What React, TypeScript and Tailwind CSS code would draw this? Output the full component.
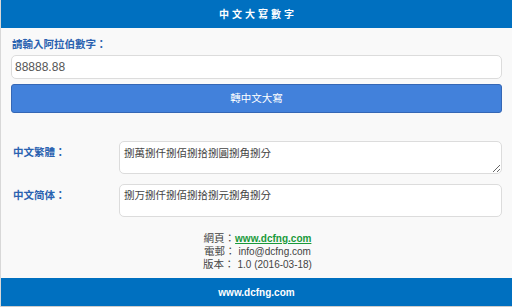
import React from "react";

const font = { fontFamily: '"Liberation Sans", "Noto Sans CJK TC", "Noto Sans CJK SC", sans-serif' };

export default function App() {
  return (
    <div
      className="w-[512px] h-[307px] bg-[#f9f9f9] flex flex-col overflow-hidden border-l border-[#d8d8d8]"
      style={font}
    >
      <div className="h-[28px] shrink-0 bg-[#0070c0] flex items-center justify-center text-white font-bold text-[10px] tracking-[3px] pl-[3px]">
        中文大寫數字
      </div>
      <div className="px-[10px] flex flex-col">
        <div className="mt-[9px] ml-[1px] h-[15px] leading-[15px] text-[10.5px] font-bold text-[#2a62b0]">
          請輸入阿拉伯數字：
        </div>
        <input
          className="mt-[3px] h-[24px] w-full rounded-[5px] border border-[#dcdcdc] bg-white px-[3px] text-[12px] text-[#555] outline-none"
          defaultValue="88888.88"
          style={font}
        />
        <button
          className="mt-[5px] h-[29px] w-full rounded-[3px] border border-[#3567b5] bg-[#4281db] text-white text-[10.5px] flex items-center justify-center"
          style={font}
        >
          轉中文大寫
        </button>
        <div className="mt-[28px] flex items-start">
          <div className="w-[108px] shrink-0 pt-[5px] pl-[2px] text-[10.5px] leading-[12px] font-bold text-[#2a62b0]">中文繁體：</div>
          <textarea
            className="h-[33px] flex-1 rounded-[5px] border border-[#dcdcdc] bg-white px-[4px] py-[4px] text-[10.5px] leading-[14px] text-[#444] outline-none"
            defaultValue="捌萬捌仟捌佰捌拾捌圓捌角捌分"
            style={font}
          />
        </div>
        <div className="mt-[10px] flex items-start">
          <div className="w-[108px] shrink-0 pt-[5px] pl-[2px] text-[10.5px] leading-[12px] font-bold text-[#2a62b0]">中文简体：</div>
          <div className="h-[33px] flex-1 rounded-[5px] border border-[#dcdcdc] bg-white px-[4px] py-[3px] text-[10.5px] leading-[14px] text-[#444]">
            捌万捌仟捌佰捌拾捌元捌角捌分
          </div>
        </div>
        <div className="mt-[15px] flex flex-col items-center text-[10.5px] leading-[12px] text-[#444] pl-[2px]">
          <div>
            網頁：<span className="font-bold text-[10px] text-[#1a9a3a] underline">www.dcfng.com</span>
          </div>
          <div>
            電郵： <span className="text-[10px]">info@dcfng.com</span>
          </div>
          <div>
            版本： <span className="text-[10px]">1.0 (2016-03-18)</span>
          </div>
        </div>
      </div>
      <div className="mt-auto h-[29px] shrink-0 bg-[#0070c0] border-b border-[#cccccc] flex items-center justify-center text-white font-bold text-[10px]">
        www.dcfng.com
      </div>
    </div>
  );
}
